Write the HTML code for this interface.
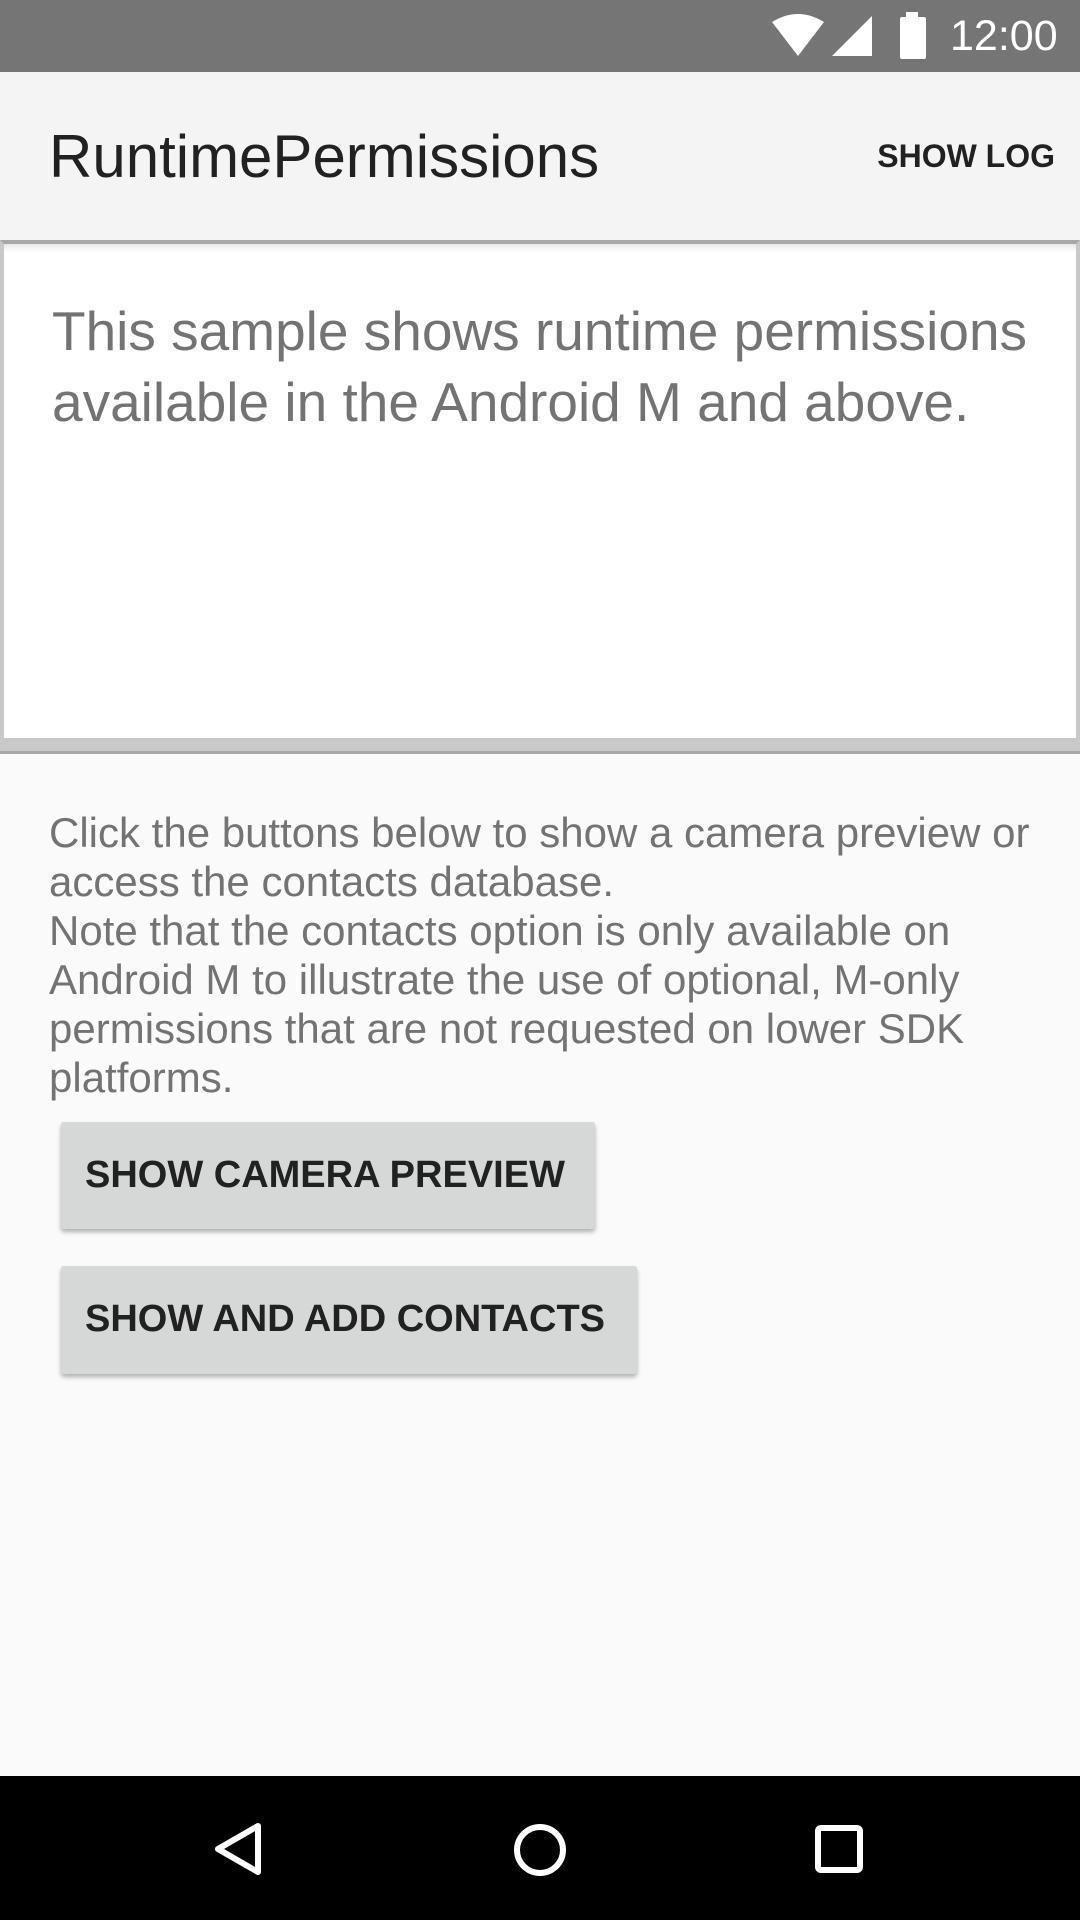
<!DOCTYPE html>
<html><head><meta charset="utf-8"><style>
body{margin:0;width:1080px;height:1920px;position:relative;background:#fafafa;font-family:"Liberation Sans",Roboto,sans-serif;overflow:hidden}
.sb{position:absolute;top:0;left:0;width:1080px;height:72px;background:#757575}
.ab{position:absolute;top:72px;left:0;width:1080px;height:168px;background:#f4f4f4}
.title{position:absolute;left:49px;top:53px;font-size:60px;color:#212121;line-height:64px}
.log{position:absolute;right:25px;top:66px;font-size:32px;font-weight:bold;color:#212121}
.box{position:absolute;top:240px;left:0;width:1072px;height:494px;background:#fff;border:4px solid #c8c8c8;border-top:4px solid #a8a8a8;box-shadow:inset 0 8px 8px -6px #ddd}
.band{position:absolute;top:738px;left:0;width:1080px;height:13px;background:#c8c8c8;border-bottom:3px solid #a8a8a8}
.desc{position:absolute;left:52px;top:296px;width:1020px;font-size:55px;line-height:71px;color:#737373}
.body{position:absolute;left:49px;top:808px;width:1010px;font-size:42px;line-height:49px;color:#737373}
.btn{position:absolute;left:61px;background:#d6d7d7;box-shadow:0 3px 5px rgba(0,0,0,.3);border-radius:3px;font-size:38px;font-weight:bold;color:#212121;line-height:107px;padding-left:24px;box-sizing:border-box}
.nav{position:absolute;top:1776px;left:0;width:1080px;height:144px;background:#000}
</style></head><body>
<div class="sb">
<svg style="position:absolute;left:770px;top:14px" width="104" height="44"><path d="M2 8 Q28 -8 54 8 L28 42 Z" fill="#fff"/><path d="M62 42 L102 2 L102 42 Z" fill="#fff"/></svg>
<svg style="position:absolute;left:898px;top:12px" width="30" height="48"><rect x="8" y="0" width="12" height="6" fill="#fff"/><rect x="2" y="5" width="26" height="42" rx="2" fill="#fff"/></svg>
<div style="position:absolute;left:950px;top:12px;font-size:43px;color:#fff">12:00</div>
</div>
<div class="ab"><div class="title">RuntimePermissions</div><div class="log">SHOW LOG</div></div>
<div class="box"></div>
<div class="band"></div>
<div class="desc">This sample shows runtime permissions available in the Android M and above.</div>
<div class="body">Click the buttons below to show a camera preview or access the contacts database.<br>Note that the contacts option is only available on Android M to illustrate the use of optional, M-only permissions that are not requested on lower SDK platforms.</div>
<div class="btn" style="top:1122px;width:534px;height:107px">SHOW CAMERA PREVIEW</div>
<div class="btn" style="top:1266px;width:576px;height:108px">SHOW AND ADD CONTACTS</div>
<div class="nav">
<svg style="position:absolute;left:210px;top:46px" width="60" height="56"><path d="M48 4 L8 27 L48 50 Z" fill="none" stroke="#fff" stroke-width="6" stroke-linejoin="round"/></svg>
<svg style="position:absolute;left:512px;top:46px" width="56" height="56"><circle cx="28" cy="28" r="23" fill="none" stroke="#fff" stroke-width="6"/></svg>
<svg style="position:absolute;left:814px;top:48px" width="52" height="52"><rect x="4" y="4" width="42" height="42" rx="3" fill="none" stroke="#fff" stroke-width="6"/></svg>
</div>
</body></html>
